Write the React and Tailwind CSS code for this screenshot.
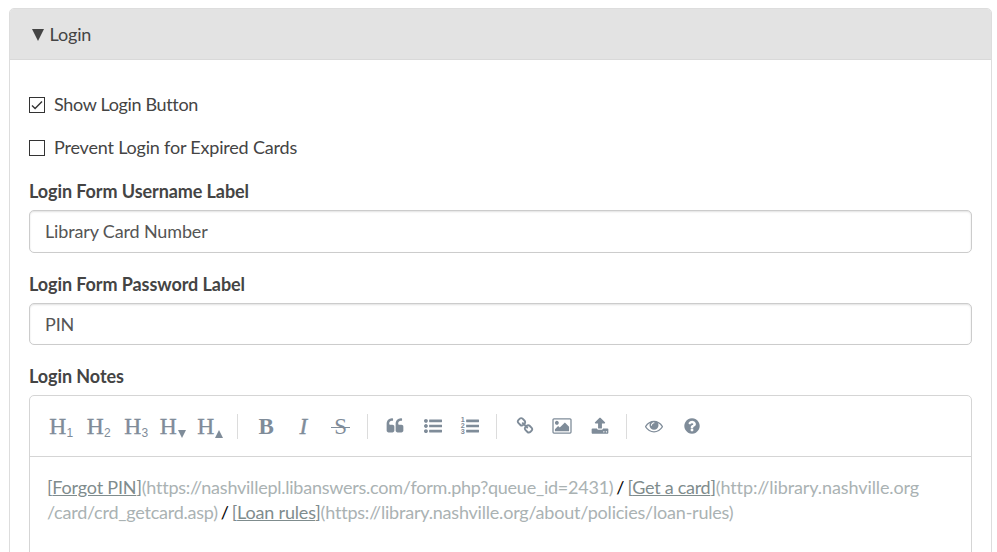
import React from "react";

const BAR = "v192q0 13-9.5 22.5t-22.5 9.5h-1216q-13 0-22.5-9.5t-9.5-22.5v-192q0-13 9.5-22.5t22.5-9.5h1216q13 0 22.5 9.5t9.5 22.5z";
const DOT = "q0 80-56 136t-136 56-136-56-56-136 56-136 136-56 136 56 56 136z";
const QUOTE = "v384q0 80-56 136t-136 56h-384q-80 0-136-56t-56-136v-704q0-104 40.5-198.5t109.5-163.5 163.5-109.5 198.5-40.5h64q26 0 45 19t19 45v128q0 26-19 45t-45 19h-64q-106 0-181 75t-75 181v32q0 40 28 68t68 28h224q80 0 136 56t56 136z";

const icons = {
  quote: `M832 960${QUOTE}M1728 960${QUOTE}`,
  bars: `M1792 1312${BAR}M1792 800${BAR}M1792 288${BAR}`,
  dots: `M384 1408${DOT}M384 896${DOT}M384 384${DOT}`,
  link: "M1520 1216q0-40-28-68l-208-208q-28-28-68-28-42 0-72 32 3 3 19 18.5t21.5 21.5 15 19 13 25.5 3.5 27.5q0 40-28 68t-68 28q-15 0-27.5-3.5t-25.5-13-19-15-21.5-21.5-18.5-19q-33 31-33 73 0 40 28 68l206 207q27 27 68 27 40 0 68-26l147-146q28-28 28-67zm-703-705q0-40-28-68l-206-207q-28-28-68-28-39 0-68 27l-147 146q-28 28-28 67 0 40 28 68l208 208q27 27 68 27 42 0 72-31-3-3-19-18.5t-21.5-21.5-15-19-13-25.5-3.5-27.5q0-40 28-68t68-28q15 0 27.5 3.5t25.5 13 19 15 21.5 21.5 18.5 19q33-31 33-73zm895 705q0 120-85 203l-147 146q-83 83-203 83-121 0-204-85l-206-207q-83-83-83-203 0-123 88-209l-88-88q-86 88-208 88-120 0-204-84l-208-208q-84-84-84-204t85-203l147-146q83-83 203-83 121 0 204 85l206 207q83 83 83 203 0 123-88 209l88 88q86-88 208-88 120 0 204 84l208 208q84 84 84 204z",
  image: "M576 576q0 80-56 136t-136 56-136-56-56-136 56-136 136-56 136 56 56 136zm1024 384v448h-1408v-192l320-320 160 160 512-512zm96-704h-1600q-13 0-22.5 9.5t-9.5 22.5v1216q0 13 9.5 22.5t22.5 9.5h1600q13 0 22.5-9.5t9.5-22.5v-1216q0-13-9.5-22.5t-22.5-9.5zm160 32v1216q0 66-47 113t-113 47h-1600q-66 0-113-47t-47-113v-1216q0-66 47-113t113-47h1600q66 0 113 47t47 113z",
  upload: "M1344 1472q0-26-19-45t-45-19-45 19-19 45 19 45 45 19 45-19 19-45zm256 0q0-26-19-45t-45-19-45 19-19 45 19 45 45 19 45-19 19-45zm128-224v320q0 40-28 68t-68 28h-1472q-40 0-68-28t-28-68v-320q0-40 28-68t68-28h427q21 56 70.5 92t110.5 36h256q61 0 110.5-36t70.5-92h427q40 0 68 28t28 68zm-325-648q-17 40-59 40h-256v448q0 26-19 45t-45 19h-256q-26 0-45-19t-19-45v-448h-256q-42 0-59-40-17-39 14-69l448-448q18-19 45-19t45 19l448 448q31 30 14 69z",
  eye: "M1664 960q-152-236-381-353 61 104 61 225 0 185-131.5 316.5t-316.5 131.5-316.5-131.5-131.5-316.5q0-121 61-225-229 117-381 353 133 205 333.5 326.5t434.5 121.5 434.5-121.5 333.5-326.5zm-720-384q0-20-14-34t-34-14q-125 0-214.5 89.5t-89.5 214.5q0 20 14 34t34 14 34-14 14-34q0-86 61-147t147-61q20 0 34-14t14-34zm848 384q0 34-20 69-140 230-376.5 368.5t-499.5 138.5-499.5-139-376.5-368q-20-35-20-69t20-69q140-229 376.5-368t499.5-139 499.5 139 376.5 368q20 35 20 69z",
  help: "M1024 1376v-192q0-14-9-23t-23-9h-192q-14 0-23 9t-9 23v192q0 14 9 23t23 9h192q14 0 23-9t9-23zm256-672q0-88-55.5-163t-138.5-116-170-41q-243 0-371 213-15 24 8 42l132 100q7 6 19 6 16 0 25-12 53-68 86-92 34-24 86-24 48 0 85.5 26t37.5 59q0 38-20 61t-68 45q-63 28-115.5 86.5t-52.5 125.5v36q0 14 9 23t23 9h192q14 0 23-9t9-23q0-19 21.5-49.5t54.5-49.5q32-18 49-28.5t46-35 44.5-48 28-60.5 12.5-81zm384 192q0 209-103 385.5t-279.5 279.5-385.5 103-385.5-103-279.5-279.5-103-385.5 103-385.5 279.5-279.5 385.5-103 385.5 103 279.5 279.5 103 385.5z",
};

function Icon({ d, children }) {
  return (
    <svg viewBox="0 0 1792 1792" className="size-[18px] overflow-visible" fill="currentColor">
      <path d={d} />
      {children}
    </svg>
  );
}

function Tool({ children }) {
  return <button className="flex h-[38px] w-[37.5px] shrink-0 items-center justify-center">{children}</button>;
}

function Separator() {
  return (
    <span className="flex w-[17px] shrink-0 pl-[7px]">
      <i className="h-[25px] w-px bg-[#dcdcdc]" />
    </span>
  );
}

function Heading({ sub }) {
  return (
    <Tool>
      <span className="flex items-end font-['Liberation_Serif',serif] text-[23.5px] leading-[26px] [-webkit-text-stroke:0.4px_#7f8c99]">
        H
        <small className="-mb-[2px] w-[7px] font-['Liberation_Sans',sans-serif] text-[12px] leading-[15px] [-webkit-text-stroke:0]">{sub}</small>
      </span>
    </Tool>
  );
}

function HeadingStep({ up }) {
  return (
    <Tool>
      <span className="flex items-end pr-[2px] font-['Liberation_Serif',serif] text-[23.5px] leading-[26px] [-webkit-text-stroke:0.4px_#7f8c99]">
        H
        <svg viewBox="0 0 8 8" className="mb-px ml-px size-[8px]" fill="currentColor" stroke="none">
          <path d={up ? "M0 8L4 0L8 8z" : "M0 0H8L4 8z"} />
        </svg>
      </span>
    </Tool>
  );
}

function Check({ checked, tracking = "tracking-[-0.19px]", children }) {
  return (
    <label className={`flex h-[43px] items-center ${tracking}`}>
      <span className="mr-[9px] flex size-4 items-center justify-center border border-[#333] bg-white">
        {checked && (
          <svg viewBox="0 0 14 14" className="size-[14px]" fill="none" stroke="#333" strokeWidth="1.4">
            <path d="M2 7.4L5.1 10.4L12 3.6" />
          </svg>
        )}
      </span>
      {children}
    </label>
  );
}

function Field({ label, value, height = "h-[43px]" }) {
  return (
    <div className="mb-[18px] flex flex-col">
      <label className="mb-[6px] h-[26px] font-bold leading-[26px] tracking-[-0.08px]">{label}</label>
      <div className={`${height} flex items-center rounded-[5px] border border-[#ccc] bg-white px-[15px] tracking-[-0.15px] text-[#555] shadow-[inset_0_1px_2px_rgba(0,0,0,0.12)]`}>
        {value}
      </div>
    </div>
  );
}

function LinkText({ tracking = "tracking-[-0.18px]", children }) {
  return (
    <span className={`${tracking} text-[#7f8c8d]`}>
      [<span className="underline">{children}</span>]
    </span>
  );
}

function Url({ tracking = "tracking-[-0.23px]", children }) {
  return <span className={`${tracking} text-[#aab2b3]`}>{children}</span>;
}

function Slash() {
  return <span className="[word-spacing:-1.7px]"> / </span>;
}

export default function App() {
  return (
    <div className="h-[552px] w-[997px] overflow-hidden bg-white pl-[9px] pt-2 font-['Lato',sans-serif] text-[18px] leading-[25px] text-[#444]">
      <section className="h-[560px] w-[983px] rounded-[5px] border border-[#ddd]">
        <header className="flex h-[51px] items-center rounded-t-[4px] border-b border-[#d9d9d9] bg-[#e3e3e3] pl-[22px] tracking-[-0.15px]">
          <svg viewBox="0 0 12 12" className="mr-[5.5px] mt-px size-3" fill="#444">
            <path d="M0 0H12L6 12z" />
          </svg>
          Login
        </header>
        <div className="px-[19px] pt-[23px]">
          <Check checked tracking="tracking-[-0.34px]">Show Login Button</Check>
          <Check>Prevent Login for Expired Cards</Check>
          <div className="pt-[9px]">
            <Field label="Login Form Username Label" value="Library Card Number" />
            <Field label="Login Form Password Label" value="PIN" height="h-[42px]" />
          </div>
          <label className="block h-[32px] font-bold leading-[26px] tracking-[-0.07px]">Login Notes</label>
          <div className="h-[200px] rounded-t-[5px] border border-[#d5d5d5]">
            <div className="flex h-[61px] items-center border-b border-[#d5d5d5] pl-[12.5px] text-[#7f8c99]">
              <Heading sub="1" />
              <Heading sub="2" />
              <Heading sub="3" />
              <HeadingStep />
              <HeadingStep up />
              <Separator />
              <Tool><b className="pl-px font-['Liberation_Serif',serif] text-[23px]">B</b></Tool>
              <Tool><i className="font-['Liberation_Serif',serif] text-[23px] [-webkit-text-stroke:0.4px_#7f8c99]">I</i></Tool>
              <Tool>
                <span className="relative font-['Liberation_Serif',serif] text-[23px] after:absolute after:-left-[3px] after:-right-[3px] after:top-[13px] after:h-px after:bg-[#7f8c99]">S</span>
              </Tool>
              <Separator />
              <Tool><Icon d={icons.quote} /></Tool>
              <Tool><Icon d={icons.bars + icons.dots} /></Tool>
              <Tool>
                <Icon d={icons.bars}>
                  <g fontSize="720" fontWeight="700" fontFamily="Liberation Sans, sans-serif">
                    <text x="-20" y="500">1</text>
                    <text x="-20" y="1120">2</text>
                    <text x="-20" y="1740">3</text>
                  </g>
                </Icon>
              </Tool>
              <Separator />
              <Tool><Icon d={icons.link} /></Tool>
              <Tool><Icon d={icons.image} /></Tool>
              <Tool><Icon d={icons.upload} /></Tool>
              <Separator />
              <Tool><Icon d={icons.eye} /></Tool>
              <Tool><Icon d={icons.help} /></Tool>
            </div>
            <p className="px-[17px] pt-[18px] text-black">
              <LinkText>Forgot PIN</LinkText>
              <Url tracking="tracking-[-0.24px]">(https://nashvillepl.libanswers.com/form.php?queue_id=2431)</Url>
              <Slash />
              <LinkText tracking="tracking-[-0.27px]">Get a card</LinkText>
              <Url tracking="tracking-[-0.1px]">(http://library.nashville.org</Url>
              <br />
              <Url>/card/crd_getcard.asp)</Url>
              <Slash />
              <LinkText>Loan rules</LinkText>
              <Url tracking="tracking-[-0.21px]">(https://library.nashville.org/about/policies/loan-rules)</Url>
            </p>
          </div>
        </div>
      </section>
    </div>
  );
}
